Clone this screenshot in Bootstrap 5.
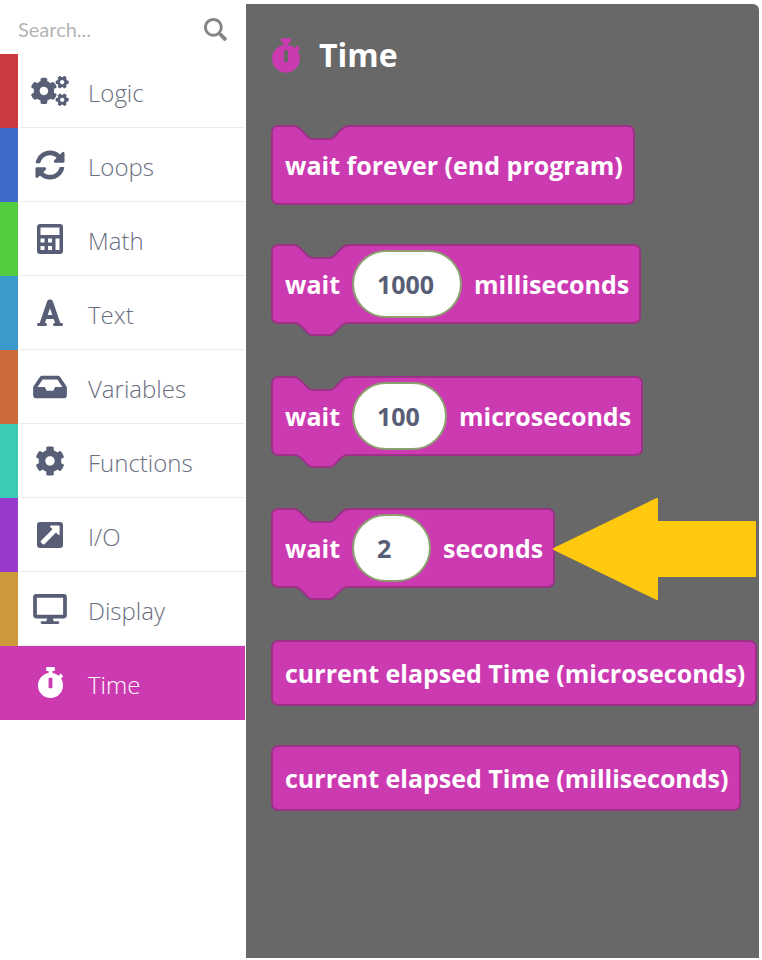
<!DOCTYPE html>
<html lang="en">
<head>
<meta charset="utf-8">
<meta name="viewport" content="width=device-width, initial-scale=1">
<title>Block toolbox</title>
<link href="https://cdn.jsdelivr.net/npm/bootstrap@5.3.0/dist/css/bootstrap.min.css" rel="stylesheet">
<style>
  :root { --time: #cc3ab2; --time-edge: #9b3288; --panel: #686868; --ink: #575e75; }
  body { font-family: "Open Sans", "Noto Sans", sans-serif; background: #fff; }
  .workspace { min-height: 100vh; }
  .toolbox { width: 246px; padding-right: 1px; }
  .search-row { height: 54px; padding: 4px 18px 0; }
  .search-row input { font: 20px/28px Lato, sans-serif; color: #777; outline: 0; min-width: 0; }
  .search-row input::placeholder { color: #b4b4b4; opacity: 1; }
  .search-row button { color: #858585; line-height: 0; }
  .cat { height: 74px; border-left: 18px solid var(--hue); color: var(--ink); font-size: 24px; font-weight: 300; line-height: 32px; }
  .cat .cat-body { border-bottom: 1px solid #ececec; margin-left: 2px; }
  .cat .cat-icon { width: 60px; line-height: 0; }
  .cat .cat-label { padding: 5px 0 0 8px; color: #6a6f80; }
  .cat.current { background: var(--hue); }
  .cat.current .cat-icon, .cat.current .cat-label { color: #fff; }
  .cat.current .cat-body { border-color: transparent; }
  .flyout { background: var(--panel); border-radius: 0 6px 0 0; margin: 4px 3px 2px 0; padding: 27px 0 26px 25px; }
  .flyout h1 { font-size: 32px; line-height: 48px; margin-bottom: 46px; gap: 18px; }
  .flyout h1 svg { color: var(--time); }
  .stack { gap: 39px; }
  .blk { min-height: 80px; padding: 0 10px 0 12px; background: var(--time); border: 2px solid var(--time-edge); border-radius: 7px; color: #fff; font-size: 25px; font-weight: 700; line-height: 34px; white-space: nowrap; gap: 12px; }
  .reporter { min-height: 66px; }
  .has-tab { margin-bottom: 13px; }
  .notch, .tab { left: 18px; }
  .notch { top: -2px; }
  .tab { top: calc(100% - 2px); }
  .pill { height: 68px; padding: 0 0 0 23px; border: 2px solid #8aa06e; border-radius: 34px; background: #fff; color: var(--ink); font-weight: 700; outline: 0; }
  .pill-lg { width: 110px; }
  .pill-md { width: 95px; }
  .pill-sm { width: 79px; }
  .pointer { left: calc(100% - 1px); top: -13px; }
</style>
</head>
<body>
<svg class="d-none" aria-hidden="true">
  <symbol id="i-search" viewBox="0 0 512 512"><path d="M505 442.7L405.3 343c-4.5-4.5-10.6-7-17-7H372c27.600-35.300 44-79.700 44-128C416 93.100 322.900 0 208 0S0 93.100 0 208s93.100 208 208 208c48.300 0 92.700-16.400 128-44v16.300c0 6.400 2.500 12.500 7 17l99.700 99.700c9.400 9.400 24.600 9.400 33.900 0l28.300-28.300c9.400-9.400 9.400-24.600.1-34zM208 352a144 144 0 1 1 0-288a144 144 0 0 1 0 288z"/></symbol>
  <symbol id="i-cogs" viewBox="0 0 640 512">
    <path id="small-cog" d="M512.100 191l-8.200 14.300c-3 5.300-9.400 7.500-15.100 5.400-11.800-4.400-22.600-10.700-32.100-18.600-4.600-3.800-5.800-10.500-2.800-15.700l8.200-14.300c-6.900-8-12.300-17.300-15.900-27.400h-16.500c-6 0-11.200-4.300-12.200-10.300-2-12-2.100-24.600 0-37.100 1-6 6.200-10.400 12.200-10.400h16.500c3.600-10.100 9-19.400 15.900-27.400l-8.200-14.300c-3-5.200-1.900-11.900 2.800-15.700 9.500-7.900 20.400-14.200 32.100-18.600 5.700-2.100 12.100.1 15.100 5.400l8.200 14.300c10.500-1.900 21.200-1.900 31.700 0L552 6.300c3-5.300 9.400-7.500 15.100-5.400 11.800 4.400 22.600 10.700 32.100 18.600 4.600 3.800 5.800 10.500 2.800 15.700l-8.200 14.300c6.900 8 12.300 17.300 15.900 27.400h16.500c6 0 11.200 4.300 12.200 10.300 2 12 2.100 24.600 0 37.100-1 6-6.200 10.400-12.200 10.400h-16.500c-3.600 10.100-9 19.400-15.900 27.400l8.200 14.300c3 5.200 1.900 11.900-2.800 15.700-9.500 7.900-20.400 14.200-32.100 18.600-5.700 2.100-12.100-.1-15.100-5.400l-8.200-14.300c-10.400 1.900-21.200 1.900-31.700 0zm-10.500-58.800c38.500 29.600 82.400-14.300 52.800-52.800-38.500-29.700-82.400 14.300-52.800 52.800z"/>
    <use href="#small-cog" y="300"/>
    <path d="M386.300 286.100l33.700 16.800c10.100 5.800 14.500 18.100 10.500 29.100-8.900 24.200-26.400 46.400-42.600 65.800-7.400 8.900-20.200 11.100-30.300 5.300l-29.100-16.800c-16 13.700-34.600 24.600-54.900 31.700v33.600c0 11.600-8.300 21.600-19.700 23.600-24.600 4.200-50.400 4.400-75.900 0-11.500-2-20-11.900-20-23.600V418c-20.300-7.200-38.900-18-54.900-31.700L74 403c-10 5.800-22.900 3.600-30.300-5.300-16.200-19.400-33.300-41.600-42.200-65.700-4-10.900.4-23.200 10.500-29.100l33.300-16.800c-3.900-20.900-3.900-42.400 0-63.400L12 205.800c-10.100-5.800-14.600-18.100-10.500-29 8.900-24.200 26-46.400 42.200-65.800 7.400-8.900 20.200-11.100 30.300-5.300l29.100 16.800c16-13.700 34.600-24.600 54.900-31.700V57.100c0-11.500 8.200-21.500 19.600-23.500 24.600-4.200 50.500-4.400 76-.1 11.500 2 20 11.900 20 23.600v33.600c20.300 7.200 38.900 18 54.900 31.700l29.100-16.800c10-5.800 22.900-3.600 30.300 5.300 16.200 19.400 33.200 41.600 42.100 65.800 4 10.900.1 23.200-10 29.100l-33.700 16.800c3.900 21 3.900 42.500 0 63.500zm-117.600 21.100c59.200-77-28.700-164.900-105.700-105.700-59.200 77 28.700 164.900 105.700 105.700z"/>
  </symbol>
  <symbol id="i-sync" viewBox="0 0 512 512"><path d="M370.720 133.280C339.458 104.008 298.888 87.962 255.848 88c-77.458.068-144.328 53.178-162.791 126.850-1.344 5.363-6.122 9.150-11.651 9.150H24.103c-7.498 0-13.194-6.807-11.807-14.176C33.933 94.924 134.813 8 256 8c66.448 0 126.791 26.136 171.315 68.685L463.030 40.970C478.149 25.851 504 36.559 504 57.941V192c0 13.255-10.745 24-24 24H345.941c-21.382 0-32.090-25.851-16.971-40.971l41.750-41.749zM32 296h134.059c21.382 0 32.090 25.851 16.971 40.971l-41.750 41.750c31.262 29.273 71.835 45.319 114.876 45.280 77.418-.07 144.315-53.144 162.787-126.849 1.344-5.363 6.122-9.150 11.651-9.150h57.304c7.498 0 13.194 6.807 11.807 14.176C478.067 417.076 377.187 504 256 504c-66.448 0-126.791-26.136-171.315-68.685L48.970 471.030C33.851 486.149 8 475.441 8 454.059V320c0-13.255 10.745-24 24-24z"/></symbol>
  <symbol id="i-calc" viewBox="0 0 26 30"><path fill-rule="evenodd" d="M3 0h20a3 3 0 0 1 3 3v24a3 3 0 0 1-3 3H3a3 3 0 0 1-3-3V3a3 3 0 0 1 3-3zM3.500 3.500v7.500h19V3.500zM3.500 14.500v4h4v-4zM11 14.500v4h4v-4zM3.500 22v4h4v-4zM11 22v4h4v-4zM18.500 14.500v11.500h4V14.500z"/></symbol>
  <symbol id="i-font" viewBox="0 0 26 27"><g fill="none" stroke="currentColor"><path stroke-width="3" stroke-linecap="round" d="M1.500 25.500h7M17.500 25.500h7"/><path stroke-width="5" stroke-linejoin="round" d="M5 25L12.500 3h1L21 25"/><path stroke-width="4" d="M8 18h10"/></g></symbol>
  <symbol id="i-inbox" viewBox="0 0 576 512"><path d="M567.938 243.908L462.250 85.374A48.003 48.003 0 0 0 422.311 64H153.689a48 48 0 0 0-39.938 21.374L8.062 243.908A47.994 47.994 0 0 0 0 270.533V400c0 26.510 21.490 48 48 48h480c26.510 0 48-21.490 48-48V270.533a47.994 47.994 0 0 0-8.062-26.625zM162.252 128h251.497l85.333 128H376l-32 64H232l-32-64H76.918l85.334-128z"/></symbol>
  <symbol id="i-cog" viewBox="0 0 512 512"><path d="M487.400 315.700l-42.600-24.600c4.300-23.200 4.300-47 0-70.200l42.600-24.600c4.900-2.800 7.100-8.600 5.500-14-11.100-35.600-30-67.800-54.700-94.600-3.800-4.100-10-5.100-14.800-2.300L380.800 110c-17.900-15.400-38.500-27.300-60.800-35.100V25.800c0-5.600-3.900-10.500-9.400-11.700-36.700-8.200-74.300-7.800-109.200 0-5.500 1.200-9.400 6.100-9.400 11.700V75c-22.200 7.900-42.800 19.800-60.800 35.100L88.700 85.500c-4.900-2.800-11-1.900-14.800 2.300-24.700 26.700-43.600 58.900-54.700 94.600-1.700 5.400.6 11.200 5.500 14L67.300 221c-4.300 23.200-4.300 47 0 70.200l-42.600 24.600c-4.900 2.800-7.100 8.600-5.500 14 11.100 35.600 30 67.800 54.700 94.600 3.800 4.100 10 5.100 14.800 2.300l42.600-24.600c17.900 15.400 38.500 27.300 60.800 35.100v49.200c0 5.600 3.900 10.500 9.400 11.700 36.700 8.200 74.300 7.800 109.200 0 5.500-1.200 9.400-6.100 9.400-11.700v-49.200c22.200-7.900 42.800-19.800 60.800-35.100l42.600 24.600c4.900 2.800 11 1.900 14.800-2.300 24.700-26.700 43.600-58.900 54.700-94.600 1.500-5.500-.7-11.300-5.600-14.100zM256 336c-44.100 0-80-35.900-80-80s35.900-80 80-80 80 35.900 80 80-35.900 80-80 80z"/></symbol>
  <symbol id="i-io" viewBox="0 0 26 26"><path fill-rule="evenodd" d="M3 0h20a3 3 0 0 1 3 3v20a3 3 0 0 1-3 3H3a3 3 0 0 1-3-3V3a3 3 0 0 1 3-3zM13.500 3.500q-1 .6-.3 1.400l2.300 2.300L4 18.800q-.8.8 0 1.600l1.800 1.800q.8.8 1.600 0L19 10.600l2.200 2.200q1 .7 1.400-.4V4.500q0-1-1-1z"/></symbol>
  <symbol id="i-display" viewBox="0 0 576 512"><path d="M528 0H48C21.500 0 0 21.500 0 48v320c0 26.500 21.500 48 48 48h192l-16 48h-72c-13.300 0-24 10.700-24 24s10.700 24 24 24h272c13.300 0 24-10.700 24-24s-10.700-24-24-24h-72l-16-48h192c26.500 0 48-21.500 48-48V48c0-26.500-21.500-48-48-48zm-16 352H64V64h448v288z"/></symbol>
  <symbol id="i-watch" viewBox="0 0 448 512"><path d="M432 304c0 114.900-93.100 208-208 208S16 418.900 16 304c0-104 76.300-190.200 176-205.500V64h-28c-6.600 0-12-5.400-12-12V12c0-6.600 5.400-12 12-12h120c6.600 0 12 5.400 12 12v40c0 6.600-5.400 12-12 12h-28v34.500c37.500 5.800 71.700 21.600 99.700 44.600l27.500-27.500c4.700-4.700 12.300-4.700 17 0l28.300 28.300c4.700 4.700 4.700 12.300 0 17l-29.400 29.400-.6.6C419.700 223.300 432 262.200 432 304zm-176 36V188.500c0-6.600-5.400-12-12-12h-40c-6.600 0-12 5.400-12 12V340c0 6.600 5.400 12 12 12h40c6.600 0 12-5.400 12-12z"/></symbol>
  <symbol id="s-notch" viewBox="0 0 60 16"><path fill="#686868" d="M0 0H60V2H57Q54 2 51 4L45 10Q42 14 38 14H22Q18 14 15 10L9 4Q6 2 3 2H0z"/><path fill="none" stroke="#9b3288" stroke-width="2" d="M0 1H3Q6 1 9 4L15 10Q18 14 22 14H38Q42 14 45 10L51 4Q54 1 57 1H60"/></symbol>
  <symbol id="s-tab" viewBox="0 0 60 17"><path fill="#cc3ab2" d="M0 0H60V2H57Q54 3 51 5L45 11Q42 15 38 15H22Q18 15 15 11L9 5Q6 2 3 2H0z"/><path fill="none" stroke="#9b3288" stroke-width="2" d="M0 3H3Q6 3 9 5L15 11Q18 15 22 15H38Q42 15 45 11L51 5Q54 3 57 3H60"/></symbol>
</svg>

<div class="workspace d-flex">
  <nav class="toolbox flex-shrink-0" aria-label="Block categories">
    <form class="search-row d-flex align-items-center justify-content-between" role="search">
      <input class="border-0 bg-transparent p-0 flex-grow-1" type="text" placeholder="Search..." aria-label="Search blocks">
      <button class="btn border-0 p-0" type="button" aria-label="Search"><svg width="23" height="23" fill="currentColor"><use href="#i-search"/></svg></button>
    </form>
    <div id="cats"></div>
  </nav>

  <main class="flyout flex-grow-1">
    <h1 class="d-flex align-items-center fw-bold text-white"><svg width="30" height="35" fill="currentColor" aria-hidden="true"><use href="#i-watch"/></svg>Time</h1>
    <div class="stack d-flex flex-column align-items-start">
      <div class="blk position-relative d-flex align-items-center">
        <svg class="notch position-absolute" width="60" height="16"><use href="#s-notch"/></svg>
        <span>wait forever (end program)</span>
      </div>
      <div class="blk has-tab position-relative d-flex align-items-center">
        <svg class="notch position-absolute" width="60" height="16"><use href="#s-notch"/></svg>
        <svg class="tab position-absolute" width="60" height="17"><use href="#s-tab"/></svg>
        <label for="ms">wait</label>
        <input class="pill pill-lg" id="ms" type="text" value="1000">
        <span>milliseconds</span>
      </div>
      <div class="blk has-tab position-relative d-flex align-items-center">
        <svg class="notch position-absolute" width="60" height="16"><use href="#s-notch"/></svg>
        <svg class="tab position-absolute" width="60" height="17"><use href="#s-tab"/></svg>
        <label for="us">wait</label>
        <input class="pill pill-md" id="us" type="text" value="100">
        <span>microseconds</span>
      </div>
      <div class="blk has-tab position-relative d-flex align-items-center">
        <svg class="notch position-absolute" width="60" height="16"><use href="#s-notch"/></svg>
        <svg class="tab position-absolute" width="60" height="17"><use href="#s-tab"/></svg>
        <label for="sec">wait</label>
        <input class="pill pill-sm" id="sec" type="text" value="2">
        <span>seconds</span>
        <svg class="pointer position-absolute" width="205" height="104" viewBox="0 0 205 104" aria-hidden="true"><path d="M2 52L105 2V25H203V79H105V102z" fill="#ffc90e" stroke="#ffc90e" stroke-width="2" stroke-linejoin="round"/></svg>
      </div>
      <div class="blk reporter d-flex align-items-center">current elapsed Time (microseconds)</div>
      <div class="blk reporter d-flex align-items-center">current elapsed Time (milliseconds)</div>
    </div>
  </main>
</div>

<script src="https://cdn.jsdelivr.net/npm/bootstrap@5.3.0/dist/js/bootstrap.bundle.min.js"></script>
<script>
  const cats = [
    ['Logic', '#cc3a3f', 'cogs', 38, 30], ['Loops', '#3f6acc', 'sync', 30, 30],
    ['Math', '#53cc3f', 'calc', 26, 30], ['Text', '#3a9acc', 'font', 26, 27],
    ['Variables', '#cc6a3a', 'inbox', 34, 30], ['Functions', '#3accb2', 'cog', 30, 30],
    ['I/O', '#9a3acc', 'io', 26, 26], ['Display', '#cc9a3a', 'display', 34, 30],
    ['Time', '#cc3ab2', 'watch', 27, 31]
  ];
  document.getElementById('cats').innerHTML = cats.map(([name, hue, icon, w, h]) => `
    <a href="#" class="cat d-flex text-decoration-none ${name === 'Time' ? 'current' : ''}" style="--hue:${hue}">
      <span class="cat-body d-flex align-items-center flex-grow-1">
        <span class="cat-icon d-flex justify-content-center"><svg width="${w}" height="${h}" fill="currentColor"><use href="#i-${icon}"/></svg></span>
        <span class="cat-label">${name}</span>
      </span>
    </a>`).join('');
</script>
</body>
</html>
